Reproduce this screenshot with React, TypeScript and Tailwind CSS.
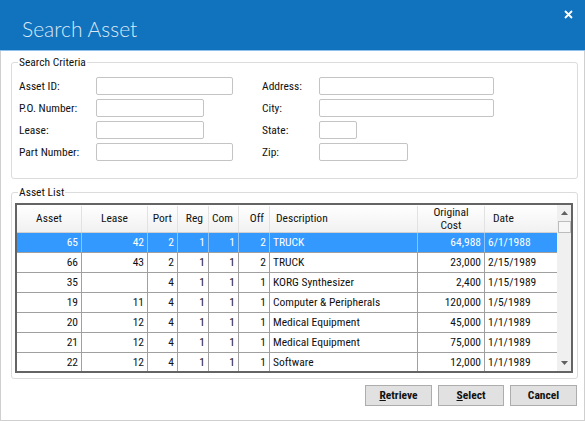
import React from "react";

const rows = [
  ["65", "42", "2", "1", "1", "2", "TRUCK", "64,988", "6/1/1988"],
  ["66", "43", "2", "1", "1", "2", "TRUCK", "23,000", "2/15/1989"],
  ["35", "", "4", "1", "1", "1", "KORG Synthesizer", "2,400", "1/15/1989"],
  ["19", "11", "4", "1", "1", "1", "Computer & Peripherals", "120,000", "1/5/1989"],
  ["20", "12", "4", "1", "1", "1", "Medical Equipment", "45,000", "1/1/1989"],
  ["21", "12", "4", "1", "1", "1", "Medical Equipment", "75,000", "1/1/1989"],
  ["22", "12", "4", "1", "1", "1", "Software", "12,000", "1/1/1989"],
];

const cols = "grid grid-cols-[65px_66px_30px_31px_30px_31px_148px_67px_72px]";

function Field({ w }: { w: string }) {
  return <div className={`h-[18px] border border-[#c4c4c4] rounded-[2px] bg-white ${w}`} />;
}

function Label({ children }: { children: React.ReactNode }) {
  return <div className="h-[18px] flex items-center pt-[1px]">{children}</div>;
}

export default function App() {
  return (
    <div className="w-[585px] h-[421px] flex flex-col bg-white text-[#111111] text-[11.5px] font-['Roboto_Condensed','Liberation_Sans_Narrow','Liberation_Sans',sans-serif]">
      <div className="h-[51px] shrink-0 bg-[#1172be] border-b border-[#8ec0ea] relative pl-[22px] pt-[16px]">
        <span className="font-['Lato',sans-serif] font-light text-[21px] leading-[26px] text-[#dbe9f6]">Search Asset</span>
        <svg className="absolute top-[10px] left-[564px]" width="9" height="9" viewBox="0 0 9 9">
          <path d="M1 1 L8 8 M8 1 L1 8" stroke="#ffffff" strokeWidth="1.8" />
        </svg>
      </div>
      <div className="flex-1 border-x border-b border-[#cfcfcf] pl-[10px] pr-[6px] flex flex-col">
        <fieldset className="mt-[5px] border border-[#dcdcdc] rounded-[3px] p-0 m-0 min-w-0">
          <legend className="ml-[6px] px-[1px] leading-[13px]">Search Criteria</legend>
          <div className="pl-[7px] pt-[8px] pb-[17px] grid grid-cols-[77px_166px_57px_auto] gap-y-[4px]">
            <Label>Asset ID:</Label>
            <Field w="w-[137px]" />
            <Label>Address:</Label>
            <Field w="w-[175px]" />
            <Label>P.O. Number:</Label>
            <Field w="w-[108px]" />
            <Label>City:</Label>
            <Field w="w-[175px]" />
            <Label>Lease:</Label>
            <Field w="w-[108px]" />
            <Label>State:</Label>
            <Field w="w-[38px]" />
            <Label>Part Number:</Label>
            <Field w="w-[137px]" />
            <Label>Zip:</Label>
            <Field w="w-[89px]" />
          </div>
        </fieldset>
        <fieldset className="mt-[7px] border border-[#dcdcdc] rounded-[3px] p-0 m-0 min-w-0">
          <legend className="ml-[6px] px-[1px] leading-[13px]">Asset List</legend>
          <div className="pl-[3px] pr-[4px] pt-[4px] pb-[5px]">
            <div className="h-[170px] border-2 border-[#646464] flex overflow-hidden bg-white">
              <div className="w-[540px] flex flex-col">
                <div className={`${cols} h-[28px] shrink-0 bg-gradient-to-b from-white to-[#f1f1f1] border-b border-[#d0d0d0] pt-[1px]`}>
                  <div className="border-r border-[#e2e2e2] flex items-center justify-center">Asset</div>
                  <div className="border-r border-[#e2e2e2] flex items-center justify-center">Lease</div>
                  <div className="border-r border-[#e2e2e2] flex items-center justify-end pr-[5px]">Port</div>
                  <div className="border-r border-[#e2e2e2] flex items-center justify-end pr-[5px]">Reg</div>
                  <div className="border-r border-[#e2e2e2] flex items-center justify-end pr-[5px]">Com</div>
                  <div className="border-r border-[#e2e2e2] flex items-center justify-end pr-[5px]">Off</div>
                  <div className="border-r border-[#e2e2e2] flex items-center pl-[6px]">Description</div>
                  <div className="border-r border-[#e2e2e2] flex flex-col items-center justify-center text-center leading-[13px]">
                    <span>Original</span>
                    <span>Cost</span>
                  </div>
                  <div className="flex items-center pl-[8px]">Date</div>
                </div>
                {rows.map((r, i) => {
                  const sel = i === 0;
                  const bc = sel ? "border-[#8cc4ff]" : "border-[#a0a0a0]";
                  return (
                    <div
                      key={i}
                      className={`${cols} h-[20px] shrink-0 border-b ${sel ? "bg-[#3399ff] text-white border-[#a0a0a0]" : "border-[#a0a0a0]"}`}
                    >
                      {r.map((c, j) => (
                        <div
                          key={j}
                          className={`flex items-center whitespace-nowrap overflow-hidden ${j < 8 ? `border-r ${bc}` : ""} ${
                            j === 6 || j === 8 ? "pl-[3px]" : "justify-end pr-[3px]"
                          }`}
                        >
                          {c}
                        </div>
                      ))}
                    </div>
                  );
                })}
              </div>
              <div className="w-[14px] bg-[#f0f0f0] flex flex-col items-center">
                <div className="h-[16px] w-full flex items-center justify-center">
                  <svg width="7" height="4" viewBox="0 0 7 4"><path d="M0 4 L3.5 0 L7 4 Z" fill="#606060" /></svg>
                </div>
                <div className="h-[12px] w-[13px] bg-[#f7f7f7] border border-[#bcbcbc]" />
                <div className="flex-1" />
                <div className="h-[16px] w-full flex items-center justify-center">
                  <svg width="7" height="4" viewBox="0 0 7 4"><path d="M0 0 L3.5 4 L7 0 Z" fill="#606060" /></svg>
                </div>
              </div>
            </div>
          </div>
        </fieldset>
        <div className="mt-[6px] mr-[1px] flex justify-end gap-[6px] font-bold">
          <button className="w-[67px] h-[21px] bg-[#e1e1e1] border border-[#adadad]"><u>R</u>etrieve</button>
          <button className="w-[66px] h-[21px] bg-[#e1e1e1] border border-[#adadad]"><u>S</u>elect</button>
          <button className="w-[67px] h-[21px] bg-[#e1e1e1] border border-[#adadad]">Cancel</button>
        </div>
      </div>
    </div>
  );
}
